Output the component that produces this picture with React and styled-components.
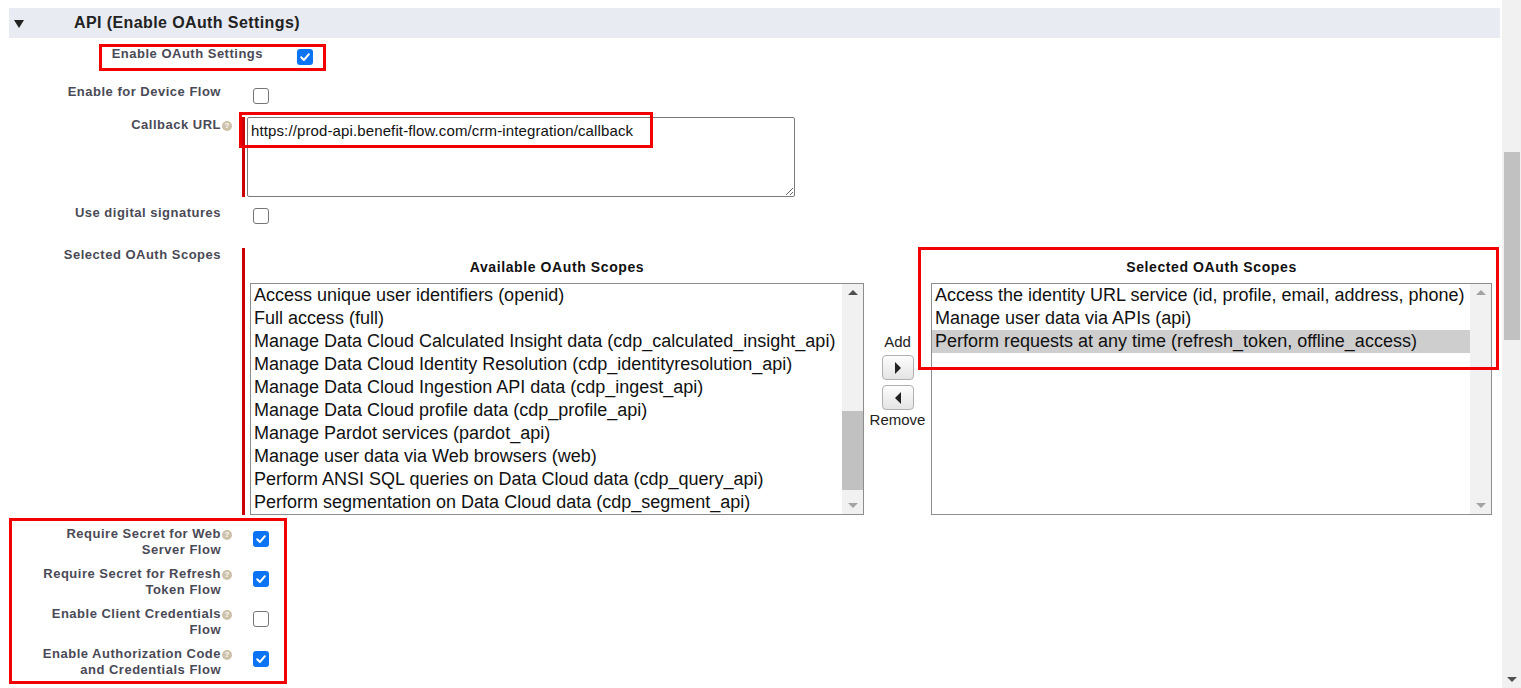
import styled, { createGlobalStyle } from "styled-components";

const availableScopes = [
  "Access unique user identifiers (openid)",
  "Full access (full)",
  "Manage Data Cloud Calculated Insight data (cdp_calculated_insight_api)",
  "Manage Data Cloud Identity Resolution (cdp_identityresolution_api)",
  "Manage Data Cloud Ingestion API data (cdp_ingest_api)",
  "Manage Data Cloud profile data (cdp_profile_api)",
  "Manage Pardot services (pardot_api)",
  "Manage user data via Web browsers (web)",
  "Perform ANSI SQL queries on Data Cloud data (cdp_query_api)",
  "Perform segmentation on Data Cloud data (cdp_segment_api)",
];

const selectedScopes = [
  "Access the identity URL service (id, profile, email, address, phone)",
  "Manage user data via APIs (api)",
  "Perform requests at any time (refresh_token, offline_access)",
];

const flowRows = [
  { lines: ["Require Secret for Web", "Server Flow"], checked: true },
  { lines: ["Require Secret for Refresh", "Token Flow"], checked: true },
  { lines: ["Enable Client Credentials", "Flow"], checked: false },
  { lines: ["Enable Authorization Code", "and Credentials Flow"], checked: true },
];

export default function App() {
  return (
    <Page>
      <GlobalStyle />
      <Main>
        <SectionHeader>
          <Twisty />
          <SectionTitle>API (Enable OAuth Settings)</SectionTitle>
        </SectionHeader>

        <Row $h={38} $top={8} $labelW={254} $gap={34}>
          <Label>Enable OAuth Settings</Label>
          <span />
          <CheckCell $pad={0} $mt={3}><Checkbox checked /></CheckCell>
          <Annotation style={{ left: 90, top: -2, width: 227, height: 27 }} />
        </Row>

        <Row $h={33}>
          <Label>Enable for Device Flow</Label>
          <span />
          <CheckCell><Checkbox /></CheckCell>
        </Row>

        <Row $h={88}>
          <Label>Callback URL</Label>
          <Help />
          <Required $pad={2}>
            <UrlBox defaultValue="https://prod-api.benefit-flow.com/crm-integration/callback" />
          </Required>
          <Annotation style={{ left: 230, top: -5, width: 414, height: 36 }} />
        </Row>

        <Row $h={42}>
          <Label>Use digital signatures</Label>
          <span />
          <CheckCell $mt={3}><Checkbox /></CheckCell>
        </Row>

        <Row $h={279}>
          <Label>Selected OAuth Scopes</Label>
          <span />
          <Required $pad={5} $mt={1}>
            <Dueling>
              <ListColumn $w={614}>
                <ListTitle>Available OAuth Scopes</ListTitle>
                <ListBox>
                  <Items>
                    {availableScopes.map(s => <Item key={s}>{s}</Item>)}
                  </Items>
                  <ListScroll>
                    <ScrollArrow $up $dark />
                    <ScrollTrack>
                      <ScrollThumb $top={110} $h={79} />
                    </ScrollTrack>
                    <ScrollArrow />
                  </ListScroll>
                </ListBox>
              </ListColumn>

              <MoveButtons>
                <MoveText>Add</MoveText>
                <MoveButton><Tri $dir="right" /></MoveButton>
                <MoveButton><Tri $dir="left" /></MoveButton>
                <MoveText>Remove</MoveText>
              </MoveButtons>

              <ListColumn $w={561}>
                <ListTitle>Selected OAuth Scopes</ListTitle>
                <ListBox>
                  <Items>
                    {selectedScopes.map((s, i) => <Item key={s} $active={i === 2}>{s}</Item>)}
                  </Items>
                  <ListScroll>
                    <ScrollArrow $up />
                    <ScrollTrack />
                    <ScrollArrow />
                  </ListScroll>
                </ListBox>
              </ListColumn>
            </Dueling>
          </Required>
          <Annotation style={{ left: 909, top: 0, width: 581, height: 123 }} />
        </Row>

        <FlowGroup>
          {flowRows.map(r => (
            <Row key={r.lines[0]} $h={40}>
              <Label>{r.lines[0]}<br />{r.lines[1]}</Label>
              <Help />
              <CheckCell $mt={5}><Checkbox checked={r.checked} /></CheckCell>
            </Row>
          ))}
          <Annotation style={{ left: 0, top: -8, width: 278, height: 166 }} />
        </FlowGroup>
      </Main>

      <PageScroll>
        <PageThumb />
        <Spacer />
        <ScrollArrow $dark />
      </PageScroll>
    </Page>
  );
}

function Checkbox({ checked }) {
  return (
    <Box $checked={checked}>
      {checked && (
        <svg width="12" height="12" viewBox="0 0 12 12">
          <path d="M2.2 6.3 L4.9 9 L9.9 3.2" fill="none" stroke="#fff" strokeWidth="2" strokeLinecap="round" strokeLinejoin="round" />
        </svg>
      )}
    </Box>
  );
}

const GlobalStyle = createGlobalStyle`
  body {
    margin: 0;
    background: #fff;
    font-family: "Liberation Sans", Arial, sans-serif;
    overflow: hidden;
  }
`;

const Page = styled.div`
  display: flex;
  height: 688px;
  overflow: hidden;
`;

const Main = styled.div`
  flex: 1;
  padding: 8px 2px 0 9px;
`;

const SectionHeader = styled.div`
  display: flex;
  align-items: center;
  height: 30px;
  background: #e8ebf2;
  padding-left: 5px;
`;

const Twisty = styled.span`
  width: 0;
  height: 0;
  border-left: 5px solid transparent;
  border-right: 5px solid transparent;
  border-top: 8px solid #222;
  margin-top: 1px;
`;

const SectionTitle = styled.h2`
  margin: 0 0 0 50px;
  font-size: 16px;
  font-weight: 700;
  letter-spacing: 0.4px;
  color: #222;
`;

const Row = styled.div`
  position: relative;
  display: grid;
  grid-template-columns: ${p => p.$labelW || 212}px ${p => p.$gap || 21}px 1fr;
  align-items: start;
  min-height: ${p => p.$h}px;
  margin-top: ${p => p.$top || 0}px;
`;

const Label = styled.div`
  text-align: right;
  font-size: 13px;
  line-height: 16px;
  font-weight: 700;
  letter-spacing: 0.5px;
  color: #4a4a56;
`;

const Help = styled.span`
  width: 10px;
  height: 10px;
  margin: 4px 0 0 1px;
  border-radius: 50%;
  background: #cdc1aa;
  position: relative;
  &::after {
    content: "?";
    position: absolute;
    inset: 0;
    font-size: 8px;
    line-height: 10px;
    font-weight: 700;
    text-align: center;
    color: #fff;
  }
`;

const CheckCell = styled.div`
  padding-left: ${p => (p.$pad === undefined ? 11 : p.$pad)}px;
  margin-top: ${p => (p.$mt === undefined ? 4 : p.$mt)}px;
`;

const Box = styled.span`
  display: flex;
  align-items: center;
  justify-content: center;
  box-sizing: border-box;
  width: 16px;
  height: 16px;
  border-radius: 3px;
  background: ${p => (p.$checked ? "#0b74f5" : "#fff")};
  border: ${p => (p.$checked ? "none" : "1.5px solid #767676")};
`;

const Required = styled.div`
  border-left: 3px solid #c00;
  padding-left: ${p => p.$pad}px;
  margin-top: ${p => p.$mt || 0}px;
`;

const UrlBox = styled.textarea`
  display: block;
  box-sizing: border-box;
  width: 548px;
  height: 80px;
  padding: 4px 3px;
  border: 1px solid #7a7a7a;
  border-radius: 2px;
  font-family: "Liberation Sans", Arial, sans-serif;
  font-size: 15px;
  letter-spacing: 0.12px;
  line-height: 18px;
  color: #111;
  resize: both;
  outline: none;
`;

const Annotation = styled.div`
  position: absolute;
  box-sizing: border-box;
  border: 3px solid #f20000;
  pointer-events: none;
`;

const Dueling = styled.div`
  display: flex;
  align-items: flex-start;
`;

const ListColumn = styled.div`
  width: ${p => p.$w}px;
`;

const ListTitle = styled.div`
  height: 35px;
  box-sizing: border-box;
  padding-top: 11px;
  text-align: center;
  font-size: 14px;
  line-height: 16px;
  font-weight: 700;
  letter-spacing: 0.6px;
  color: #111;
`;

const ListBox = styled.div`
  display: flex;
  height: 232px;
  box-sizing: border-box;
  border: 1px solid #8d8d8d;
`;

const Items = styled.div`
  flex: 1;
  overflow: hidden;
`;

const Item = styled.div`
  padding-left: 3px;
  height: 23px;
  font-size: 18px;
  line-height: 22px;
  white-space: nowrap;
  color: #111;
  background: ${p => (p.$active ? "#cecece" : "transparent")};
`;

const ListScroll = styled.div`
  display: flex;
  flex-direction: column;
  width: 21px;
  background: #f1f1f1;
`;

const ScrollTrack = styled.div`
  flex: 1;
`;

const ScrollThumb = styled.div`
  margin-top: ${p => p.$top}px;
  height: ${p => p.$h}px;
  background: #c1c1c1;
`;

const ScrollArrow = styled.div`
  height: 17px;
  display: flex;
  align-items: center;
  justify-content: center;
  &::before {
    content: "";
    border-left: 5px solid transparent;
    border-right: 5px solid transparent;
    ${p => (p.$up ? "border-bottom" : "border-top")}: 5px solid ${p => (p.$dark ? "#505050" : "#a3a3a3")};
  }
`;

const MoveButtons = styled.div`
  width: 67px;
  display: flex;
  flex-direction: column;
  align-items: center;
  padding-top: 85px;
`;

const MoveText = styled.div`
  font-size: 15px;
  line-height: 18px;
  color: #222;
`;

const MoveButton = styled.div`
  display: flex;
  align-items: center;
  justify-content: center;
  box-sizing: border-box;
  width: 32px;
  height: 25px;
  margin: 4px 0 1px;
  border: 1px solid #b0b0b0;
  border-radius: 4px;
  background: linear-gradient(#fdfdfd, #e4e4e4);
`;

const Tri = styled.span`
  width: 0;
  height: 0;
  border-top: 6px solid transparent;
  border-bottom: 6px solid transparent;
  ${p => (p.$dir === "right" ? "border-left" : "border-right")}: 6px solid #222;
`;

const FlowGroup = styled.div`
  position: relative;
`;

const PageScroll = styled.div`
  width: 19px;
  display: flex;
  flex-direction: column;
  background: #f1f1f1;
`;

const PageThumb = styled.div`
  margin: 152px 1px 0 2px;
  height: 188px;
  background: #c1c1c1;
`;

const Spacer = styled.div`
  flex: 1;
`;
